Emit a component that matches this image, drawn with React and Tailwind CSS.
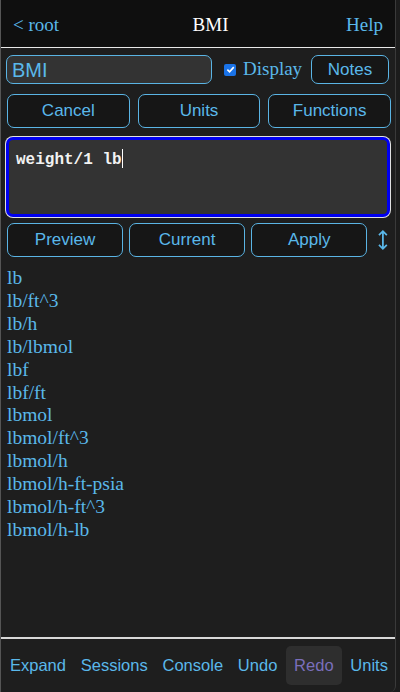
import React from 'react';

const units = [
  'lb',
  'lb/ft^3',
  'lb/h',
  'lb/lbmol',
  'lbf',
  'lbf/ft',
  'lbmol',
  'lbmol/ft^3',
  'lbmol/h',
  'lbmol/h-ft-psia',
  'lbmol/h-ft^3',
  'lbmol/h-lb',
];

const btn =
  'rounded-[7px] border border-[#5ab4e4] bg-[#161616] text-[#5ab8ea] text-[17px] [font-family:"Liberation_Sans",Arial,sans-serif] flex items-center justify-center';

const App = () => {
  return (
    <div className="flex w-[400px] h-[692px] bg-[#1c1c1c] overflow-hidden">
      <div className="flex flex-col w-[396px] h-full bg-[#1e1e1e] border-l border-[#555] border-r border-r-[#3a3a3a] rounded-br-[6px]">
        {/* header */}
        <div className="h-[48px] shrink-0 bg-[#0f0f0f] flex items-center justify-between px-3 pt-[3px] [font-family:'Liberation_Serif','Times_New_Roman',serif] text-[19px] border-b border-[#e8e8e8]">
          <span className="text-[#5ab8ea]">&lt; root</span>
          <span className="text-white pl-4">BMI</span>
          <span className="text-[#5ab8ea]">Help</span>
        </div>

        {/* name row */}
        <div className="flex items-center mt-[7px] px-[5px]">
          <div className="w-[206px] h-[29px] rounded-[7px] border border-[#5ab4e4] bg-[#333] px-[5px] flex items-center text-[#5ab8ea] text-[20px] [font-family:'Liberation_Sans',Arial,sans-serif]">
            BMI
          </div>
          <div className="flex items-center ml-[12px]">
            <span className="w-[12px] h-[12px] rounded-[2px] bg-[#1a73e8] flex items-center justify-center">
              <svg width="9" height="9" viewBox="0 0 10 10">
                <path d="M1.5 5.2 L4 7.6 L8.6 2.4" stroke="white" strokeWidth="1.8" fill="none" />
              </svg>
            </span>
            <span className="ml-[7px] text-[#5ab8ea] text-[19px] [font-family:'Liberation_Serif','Times_New_Roman',serif]">Display</span>
          </div>
          <div className={`${btn} ml-auto mr-[1px] w-[78px] h-[29px]`}>Notes</div>
        </div>

        {/* action row */}
        <div className="grid grid-cols-3 gap-[8px] mt-[10px] px-[6px] pr-[4px]">
          <div className={`${btn} h-[34px]`}>Cancel</div>
          <div className={`${btn} h-[34px]`}>Units</div>
          <div className={`${btn} h-[34px]`}>Functions</div>
        </div>

        {/* formula */}
        <div className="mx-[5px] mt-[9px] h-[80px] shrink-0 rounded-[7px] border-[3px] border-[#0000f0] ring-1 ring-[#e0e0e0] bg-[#333] px-[7px] pt-[6px]">
          <span className="text-[#f2f2f2] text-[16px] font-bold [font-family:'Liberation_Mono','Courier_New',monospace]">weight/1 lb</span>
          <span className="inline-block w-px h-[19px] bg-white align-middle -mt-[3px]" />
        </div>

        {/* preview row */}
        <div className="flex items-center gap-[6px] mt-[6px] px-[6px]">
          <div className={`${btn} h-[34px] w-[118px]`}>Preview</div>
          <div className={`${btn} h-[34px] w-[118px]`}>Current</div>
          <div className={`${btn} h-[34px] w-[118px]`}>Apply</div>
          <svg width="12" height="22" viewBox="0 0 12 22" className="ml-[4px]">
            <path d="M6 2 V20 M2 6 L6 2 L10 6 M2 16 L6 20 L10 16" stroke="#5ab8ea" strokeWidth="1.8" fill="none" />
          </svg>
        </div>

        {/* unit list */}
        <div className="flex-1 mt-[10px] px-[6px] [font-family:'Liberation_Serif','Times_New_Roman',serif] text-[19.5px] leading-[22.9px] text-[#5ab8ea]">
          {units.map((u) => (
            <div key={u}>{u}</div>
          ))}
        </div>

        {/* footer */}
        <div className="border-t-2 border-[#d8d8d8] h-[55px] shrink-0 flex items-center justify-between px-[9px] pr-[7px] text-[16.5px] text-[#5ab8ea] [font-family:'Liberation_Sans',Arial,sans-serif]">
          <span>Expand</span>
          <span>Sessions</span>
          <span>Console</span>
          <span>Undo</span>
          <span className="bg-[#2e2e2e] text-[#7a6ebb] rounded-[5px] px-[8px] py-[7px] -mx-[6px]">Redo</span>
          <span>Units</span>
        </div>
      </div>
    </div>
  );
};

export default App;
